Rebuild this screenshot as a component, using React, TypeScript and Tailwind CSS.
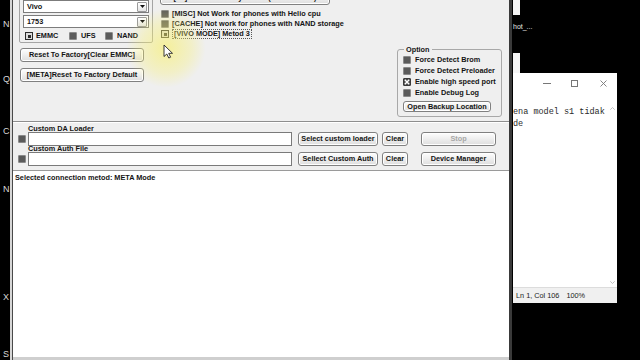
import React from "react";

// small bits reused by the tool window
const Btn = ({
  children,
  className = "",
  disabled = false,
}: {
  children: React.ReactNode;
  className?: string;
  disabled?: boolean;
}) => (
  <div
    className={`flex shrink-0 items-center justify-center whitespace-nowrap rounded-[3px] border border-[#808080] bg-gradient-to-b from-[#fefefe] to-[#dedede] shadow-[inset_0_0_0_1px_#ffffff] ${
      disabled ? "text-[#a8a8a8]" : "text-[#141414]"
    } ${className}`}
  >
    {children}
  </div>
);

const Box = ({ kind = "off" }: { kind?: "off" | "dot" | "x" }) => {
  if (kind === "dot")
    return (
      <span className="flex h-[8px] w-[8px] shrink-0 items-center justify-center border border-[#2c2c2c] bg-[#dcdcdc]">
        <span className="h-[3px] w-[3px] bg-[#2c2c2c]" />
      </span>
    );
  if (kind === "x")
    return (
      <span className="flex h-[8px] w-[8px] shrink-0 items-center justify-center rounded-[1px] border border-[#3a3a3a] bg-[#4a4a4a]">
        <svg width="6" height="6" viewBox="0 0 6 6">
          <path d="M0.8 0.8 L5.2 5.2 M5.2 0.8 L0.8 5.2" stroke="#fff" strokeWidth="1.4" />
        </svg>
      </span>
    );
  return <span className="h-[8px] w-[8px] shrink-0 rounded-[1px] border border-[#8a8a8a] bg-[#5b5b5b]" />;
};

const Combo = ({ value }: { value: string }) => (
  <div className="flex h-[13px] items-center border border-[#7c7c7c] bg-white">
    <span className="flex-1 pl-[3px]">{value}</span>
    <span className="mr-px flex h-[10px] w-[10px] items-center justify-center rounded-[1px] border border-[#9a9a9a] bg-gradient-to-b from-white to-[#e4e4e4]">
      <svg width="5" height="3" viewBox="0 0 5 3">
        <path d="M0 0 L5 0 L2.5 3 Z" fill="#111" />
      </svg>
    </span>
  </div>
);

const Row = ({ kind, label }: { kind?: "off" | "dot" | "x"; label: string }) => (
  <div className="flex h-[11px] items-center gap-[4px] whitespace-nowrap">
    <Box kind={kind} />
    <span>{label}</span>
  </div>
);

const desktopLetters = [
  { ch: "N", top: "top-[20px]" },
  { ch: "Q", top: "top-[75px]" },
  { ch: "C", top: "top-[127px]" },
  { ch: "N", top: "top-[185px]" },
  { ch: "X", top: "top-[293px]" },
  { ch: "S", top: "top-[350px]" },
];

export default function App() {
  return (
    <div className="relative flex h-[360px] w-[640px] overflow-hidden bg-black font-['Liberation_Sans',Arial,sans-serif] text-[7.3px] font-bold leading-none text-[#141414]">
      {/* desktop strip on the left */}
      <div className="relative w-[10px] shrink-0">
        {desktopLetters.map((l, i) => (
          <span
            key={i}
            className={`absolute left-[3px] ${l.top} text-[9px] font-normal text-[#d8d8d8]`}
          >
            {l.ch}
          </span>
        ))}
      </div>

      {/* main tool window */}
      <div className="flex w-[502px] shrink-0">
        <div className="w-[2px] bg-[#d6d6d6]" />
        <div className="w-px bg-[#4a4a4a]" />
        <div className="flex flex-1 flex-col bg-[#efefef]">
          {/* top area */}
          <div className="flex h-[121px]">
            {/* phone group */}
            <div className="ml-[6px] flex w-[134px] flex-col">
              <div className="mt-[-8px] flex flex-col rounded-[2px] border border-[#a4a4a4] px-[3px] pb-px pt-[7px]">
                <Combo value="Vivo" />
                <div className="mt-[2px]">
                  <Combo value="1753" />
                </div>
                <div className="mt-[3px] flex h-[10px] items-center pl-[2px]">
                  <Box kind="dot" />
                  <span className="ml-[3px] w-[33px]">EMMC</span>
                  <Box />
                  <span className="ml-[4px] w-[24px]">UFS</span>
                  <Box />
                  <span className="ml-[4px]">NAND</span>
                </div>
              </div>
              <Btn className="ml-[1px] mt-[5px] h-[14px] w-[124px]">Reset To Factory[Clear EMMC]</Btn>
              <Btn className="ml-[1px] mt-[6px] h-[14px] w-[124px]">[META]Reset To Factory Default</Btn>
            </div>

            {/* reset options */}
            <div className="ml-[7px] flex flex-col">
              <Btn className="mt-[-9px] h-[14px] w-[170px]">[FF]Reset to factory default(recomended)</Btn>
              <div className="ml-px mt-[4px] flex flex-col">
                <div className="flex h-[10px] items-center gap-[3px]">
                  <Box />
                  <span>[MISC] Not Work for phones with Helio cpu</span>
                </div>
                <div className="flex h-[10px] items-center gap-[3px]">
                  <Box />
                  <span>[CACHE] Not work for phones with NAND storage</span>
                </div>
                <div className="flex h-[10px] items-center gap-[3px]">
                  <Box kind="dot" />
                  <span className="border border-dotted border-[#555] px-px">[VIVO MODE] Metod 3</span>
                </div>
              </div>
            </div>

            {/* option group */}
            <fieldset className="ml-auto mr-[7px] mt-[45px] h-[72px] w-[105px] rounded-[3px] border border-[#a8a8a8] px-[5px]">
              <legend className="ml-px px-[2px] leading-[9px]">Option</legend>
              <Row label="Force Detect Brom" />
              <Row label="Force Detect Preloader" />
              <Row kind="x" label="Enable high speed port" />
              <Row label="Enable Debug Log" />
              <Btn className="mt-[3px] h-[11px] w-[88px]">Open Backup Location</Btn>
            </fieldset>
          </div>

          <div className="h-px bg-[#8e8e8e]" />
          <div className="h-px bg-white" />

          {/* custom files */}
          <div className="flex h-[47px] flex-col pl-[5px] pt-[3px]">
            <div className="ml-[10px] h-[6px] leading-[6px]">Custom DA Loader</div>
            <div className="flex h-[14px] items-center">
              <Box />
              <div className="ml-[2px] h-[14px] w-[264px] border border-[#7a7a7a] bg-white" />
              <Btn className="ml-[6px] h-[14px] w-[80px]">Select custom loader</Btn>
              <Btn className="ml-[4px] h-[14px] w-[26px]">Clear</Btn>
              <Btn disabled className="ml-[13px] h-[14px] w-[75px]">
                Stop
              </Btn>
            </div>
            <div className="ml-[10px] h-[6px] leading-[6px]">Custom Auth File</div>
            <div className="flex h-[14px] items-center">
              <Box />
              <div className="ml-[2px] h-[14px] w-[264px] border border-[#7a7a7a] bg-white" />
              <Btn className="ml-[6px] h-[14px] w-[80px]">Sellect Custom Auth</Btn>
              <Btn className="ml-[4px] h-[14px] w-[26px]">Clear</Btn>
              <Btn className="ml-[13px] h-[14px] w-[75px]">Device Manager</Btn>
            </div>
          </div>

          <div className="h-px bg-[#9a9a9a]" />

          {/* log */}
          <div className="flex-1 bg-white pl-[2px] pt-[2px]">
            <div className="leading-[9px]">Selected connection metod: META Mode</div>
          </div>
          <div className="h-[3px] bg-[#cfcfcf]" />
        </div>
        <div className="w-[3px] bg-[#3a3a3a]" />
      </div>

      {/* desktop on the right with notepad */}
      <div className="relative flex-1">
        <div className="absolute left-[1px] top-0 h-[15px] w-[7px] bg-[#f4f4f4]" />
        <div className="absolute left-[1px] top-[53px] h-[20px] w-[7px] bg-[#f4f4f4]" />
        <span className="absolute left-[1px] top-[23px] text-[7px] font-normal text-[#e6e6e6]">hot_...</span>

        <div className="absolute left-[1px] top-[73px] flex h-[230px] w-[104px] flex-col bg-white font-normal">
          <div className="flex h-[20px] items-center">
            <span className="ml-[30px] h-px w-[8px] bg-[#777]" />
            <span className="ml-[20px] h-[7px] w-[7px] border border-[#777]" />
            <svg className="ml-[22px]" width="7" height="7" viewBox="0 0 7 7">
              <path d="M0.5 0.5 L6.5 6.5 M6.5 0.5 L0.5 6.5" stroke="#777" strokeWidth="0.9" />
            </svg>
          </div>
          <div className="flex flex-1">
            <div className="flex-1 pt-[13px] font-['Liberation_Mono',monospace] text-[8.5px] leading-[12px] text-[#2a2a2a]">
              <div className="whitespace-nowrap">ena model s1 tidak</div>
              <div>de</div>
            </div>
            <div className="flex w-[9px] flex-col items-center justify-between pb-[3px] pt-[14px]">
              <svg width="5" height="3" viewBox="0 0 5 3">
                <path d="M0.3 2.7 L2.5 0.5 L4.7 2.7" fill="none" stroke="#b0b0b0" strokeWidth="0.8" />
              </svg>
              <svg width="5" height="3" viewBox="0 0 5 3">
                <path d="M0.3 0.3 L2.5 2.5 L4.7 0.3" fill="none" stroke="#b0b0b0" strokeWidth="0.8" />
              </svg>
            </div>
          </div>
          <div className="flex h-[16px] items-center border-t border-[#dcdcdc] bg-[#f0f0f0] pl-[3px] text-[7.3px] text-[#222]">
            <span>Ln 1, Col 106</span>
            <span className="ml-[7px]">100%</span>
          </div>
        </div>
      </div>

      {/* mouse pointer with highlight */}
      <div className="pointer-events-none absolute left-[126px] top-[8px] h-[80px] w-[80px] rounded-full bg-[radial-gradient(circle,rgba(248,240,110,0.65)_0%,rgba(248,240,110,0.3)_45%,rgba(248,240,110,0)_70%)]" />
      <svg className="pointer-events-none absolute left-[163px] top-[44px]" width="11" height="15" viewBox="0 0 11 15">
        <path d="M1 1 L1 12.5 L3.8 10 L5.8 14 L7.6 13.2 L5.7 9.3 L9.5 9.3 Z" fill="#fff" stroke="#222" strokeWidth="0.9" />
      </svg>
    </div>
  );
}
